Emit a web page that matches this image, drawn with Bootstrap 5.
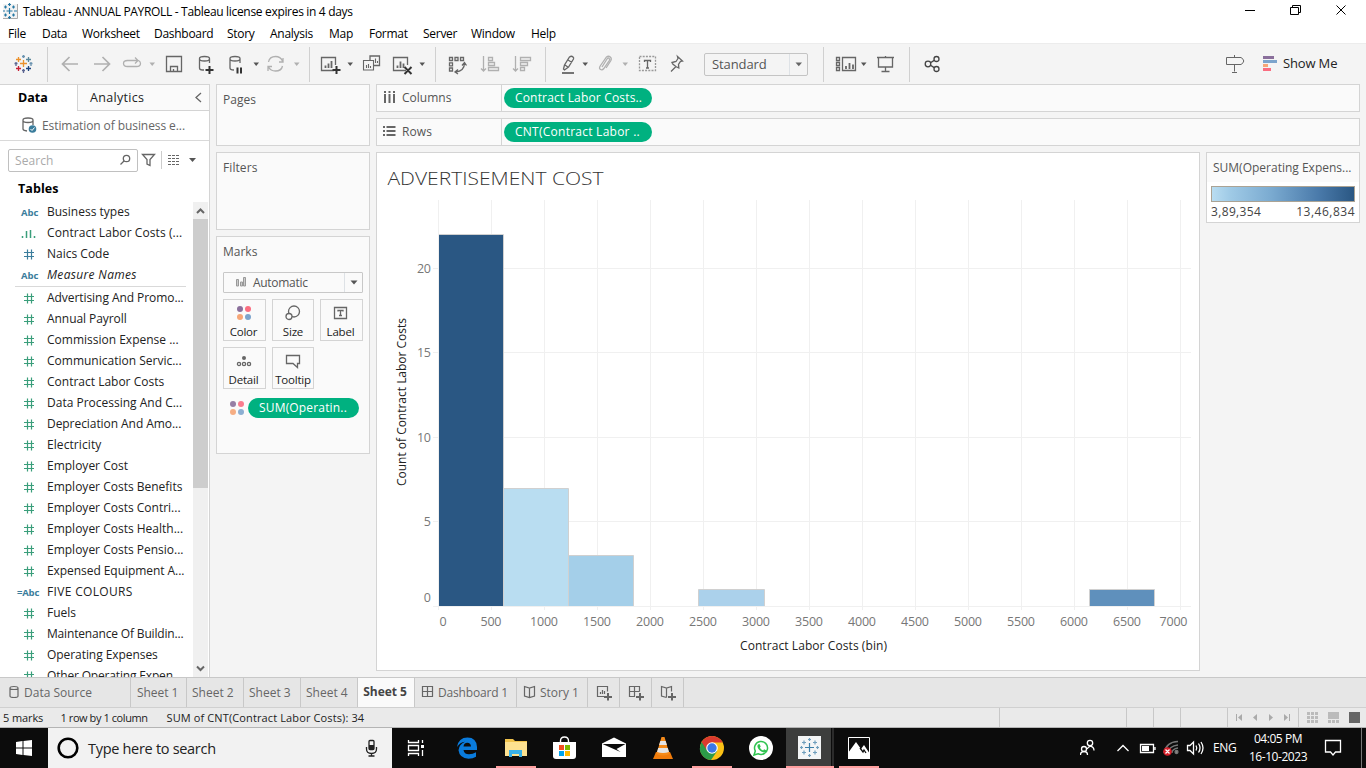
<!DOCTYPE html>
<html lang="en">
<head>
<meta charset="utf-8">
<meta name="viewport" content="width=device-width, initial-scale=1">
<title>Tableau - ANNUAL PAYROLL</title>
<link href="https://cdn.jsdelivr.net/npm/bootstrap@5.3.0/dist/css/bootstrap.min.css" rel="stylesheet">
<style>
body{width:1366px;height:768px;overflow:hidden;background:#f4f4f4;font:12px/16px "Open Sans","Noto Sans",sans-serif;color:#333}
svg{display:block;flex:none;fill:none;stroke:#666;stroke-width:1.3}
svg text{stroke:none}
.titlebar{height:23px;color:#000;font-size:12px;letter-spacing:-.32px}
.menubar{height:20px;color:#000;font-size:12px;letter-spacing:-.28px;padding-top:1px}
.menubar span{flex:none;white-space:nowrap;padding-left:8px}
.toolbar{height:41px;border-top:1px solid #ececec}
.toolbar .sep{width:1px;height:35px;background:#d0d0d0;flex:none}
.stdbox{width:104px;height:23px;border:1px solid #c4c4c4;border-radius:2px;font-size:13px;color:#555;letter-spacing:-.1px}
.work{height:593px}
.side{width:210px;border-top:1px solid #d4d4d4;border-right:1px solid #d4d4d4;background:#fff;flex:none}
.tab-on{width:77px;color:#000;font-weight:700;font-size:12.5px}
.tab-off{background:#fafafa;border-left:1px solid #d4d4d4;border-bottom:1px solid #d4d4d4;color:#222;font-size:12.5px;letter-spacing:.32px}
.source{height:30px;border-bottom:1px solid #d9d9d9;color:#666;letter-spacing:-.08px}
.searchbox{width:130px;height:23px;border:1px solid #c0c0c0;border-radius:2px;color:#aaa;margin-left:8px}
.fields{height:475px}
.fld{height:21px;color:#222;white-space:nowrap}
.fld svg{width:47px;height:21px}
.fld span:last-child{padding-bottom:1px}
.ftype{width:47px;padding-left:21px;font-size:9.5px;font-weight:700;color:#3b7d9c;padding-top:1px}
.calc{padding-left:17px;letter-spacing:-.2px}
.sp-a{letter-spacing:-.06px}
.sp-b{letter-spacing:-.17px}
.sp-c{letter-spacing:.08px}
.sp-d{letter-spacing:.33px}
.fldrule{height:1px;margin:0 0 1px 15px;width:171px;background:#d9d9d9}
.hash-dim{color:#3b7d9c}
.hash-mea{color:#3a9e7b}
.sbar{width:15px;background:#f0f0f0;margin-right:1px}
.sthumb{height:269px;background:#cdcdcd}
.shelfcard{border:1px solid #d4d4d4;background:#fafafa;color:#555}
.midcol{width:154px;margin-left:6px;gap:6px}
.midcol .shelfcard{padding:7px 6px}
.shelf{height:28px}
.shelfname{width:125px;border-right:1px solid #d4d4d4}
.pill{background:#00b180;color:#fff;border-radius:10px;height:20px;font-weight:500;white-space:nowrap;letter-spacing:.17px}
.markgrid{display:grid;grid-template-columns:43px 42px 43px;gap:6px;margin-top:6px}
.markbtn{height:42px;border:1px solid #d4d4d4;background:#fafafa;color:#222;font-size:11.5px;letter-spacing:-.2px}
.markbtn svg{margin:5px 0 3px}
.nudge{padding-right:2px}
.marktype{height:21px;border:1px solid #c8c8c8;border-radius:1px}
.ramp{height:16px;width:144px;border:1px solid #aba394;background:linear-gradient(90deg,#b9ddf1,#9fcae6 13%,#7aaad0 42%,#4a7aaa 75%,#2a5783)}
.legnum{letter-spacing:.35px;color:#444}
.sheettabs{height:31px;background:#e6e6e6;border-top:1px solid #c8c8c8;border-bottom:1px solid #d0d0d0;color:#666}
.sheettabs>div{border-right:1px solid #c8c8c8;white-space:nowrap;flex:none}
.sheettabs .sht{padding-left:5px}
.sheettabs .cur{background:#fafafa;color:#444;font-weight:700;letter-spacing:-.05px}
.status{height:20px;background:#eaeaea;border-bottom:1px solid #b4b4b4;color:#222;font-size:11px;white-space:nowrap}
.st-a{letter-spacing:-.1px}
.st-b{letter-spacing:-.42px}
.st-c{letter-spacing:.12px}
.cell{border-left:1px solid #c8c8c8;flex:none}
.taskbar{height:40px;background:#0c0c0c;color:#fff}
.tsearch{width:344px;background:#f2f2f2;color:#222;font-size:14.5px;letter-spacing:-.3px}
.clock{width:76px;letter-spacing:-.45px;line-height:18px}
</style>
</head>
<body>
<svg width="0" height="0" class="position-absolute"><symbol id="hash" viewBox="0 0 47 21"><path d="M27.500 5.500v10M31.500 5.500v10M24 8.500h10M24 12.500h10" stroke="currentColor" stroke-width="1.200"/></symbol></svg>
<header class="bg-white">
<div class="titlebar d-flex align-items-center">
<svg width="23" height="23" viewBox="0 0 23 23"><path d="M3 4h14v14H3z" stroke="none" fill="#f3f3f3"/><path d="M17.500 4v14.500H3" stroke="#aaa" stroke-width="1"/><path d="M9.500 8v6M6.500 11h6M9.500 3v3M8 4.500h3M9.500 16v3M8 17.500h3M3 11h2M14 11h3M5.500 5.500v3M4 7h3M13.500 5.500v3M12 7h3M5.500 13.500v3M4 15h3M13.500 13.500v3M12 15h3" stroke="#2678a4" stroke-width="1.200"/></svg>
<span style="padding-top:1px">Tableau - ANNUAL PAYROLL - Tableau license expires in 4 days</span>
<svg class="ms-auto" width="146" height="23" viewBox="1220 0 146 23" style="stroke:#000;stroke-width:1"><path d="M1245 10.500h10M1290.500 7.500h8v7h-8zM1292.500 7.500v-2h8v7h-2M1336.500 5.500l9 9M1345.500 5.500l-9 9"/></svg>
</div>
<div class="menubar d-flex align-items-center"><span style="width:34px">File</span><span style="width:40px">Data</span><span style="width:72px">Worksheet</span><span style="width:73px">Dashboard</span><span style="width:43px">Story</span><span style="width:59px">Analysis</span><span style="width:40px">Map</span><span style="width:54px">Format</span><span style="width:48px">Server</span><span style="width:60px">Window</span><span>Help</span></div>
</header>

<div class="toolbar d-flex align-items-center">
<svg width="47" height="40" viewBox="0 44 47 40"><g stroke-width="1.300"><path d="M23.500 60v7M20 63.500h7" stroke="#eb912c"/><path d="M23.500 55v3M22 56.500h3M31 62v4M29.500 63.500h3" stroke="#6b93b0"/><path d="M23.500 69v4M22 70.500h3M16 62v4M14.500 63.500h3" stroke="#5c6692"/><path d="M18.500 57v5M16 59.500h5" stroke="#eb912c"/><path d="M28.500 57v5M26 59.500h5" stroke="#59879b"/><path d="M18.500 66v5M16 68.500h5" stroke="#c72037"/><path d="M28.500 66v5M26 68.500h5" stroke="#1f447e"/></g></svg>
<div class="sep"></div>
<svg width="109" height="40" viewBox="48 44 109 40" style="stroke:#b0b0b0"><path d="M62.500 64H78M69.500 57l-7 7 7 7M94 64h15.500M102.500 57l7 7-7 7" stroke-width="1.700"/><path d="M133 60.500h-5.500q-4 0-4 3t4 3h9q4 0 4-3 0-2-2-3M131 60.500h7M135 57.500l3 3-3 3"/><path d="M149.500 62.500h5.500l-2.800 3.500z" fill="#b0b0b0" stroke="none"/></svg>
<svg width="34" height="40" viewBox="157 44 34 40"><path d="M166.500 56.500h15v15h-15zM170.500 71v-4.500h7V71M173.500 71v-2"/></svg>
<svg width="70" height="40" viewBox="191 44 70 40"><path d="M204 70h-1.500q-3 0-3-2V58.500q0-2 5-2t5 2V63M199.500 59q0 2 5 2t5-2M234 70q-4 0-4-2V58.500q0-2 5-2t5 2V63M230 59q0 2 5 2t5-2"/><path d="M209.500 66v8M205.500 70h8M237.500 67.500v6M241 67.500v6" stroke="#333" stroke-width="2"/><path d="M253.500 62.500h5.500l-2.800 3.500z" fill="#555" stroke="none"/></svg>
<svg width="48" height="40" viewBox="261 44 48 40" style="stroke:#b0b0b0"><path d="M268.500 62q1-5.500 7-5.500 5 0 7 4.500M283 58v4h-4M282.500 66q-1 5-7 5-5 0-7-4M268 71v-4.500h4"/><path d="M294 62.500h5.500l-2.800 3.500z" fill="#b0b0b0" stroke="none"/></svg>
<div class="sep"></div>
<svg width="125" height="40" viewBox="310 44 125 40"><path d="M334 70.500h-12.500v-13h14V65M406 70.500h-12.500v-13h14V65M370 60.500v-4.500h9.500v9.500H374"/><path d="M363.500 60.500h10v9.500h-10zM366.500 68v-3M368.500 68v-4M370.500 68v-2M373.500 63v-2.500M375.500 63v-4.500M377.500 63v-2" stroke-width="1.100"/><path d="M325.500 68v-2.500M328.500 68v-4.500M331.500 68v-7M397.500 68v-2.500M400.500 68v-6.500M403.500 68v-4.500" stroke-width="1.800"/><path d="M336.500 66v8M332.500 70h8M404.500 67l7 7M411.500 67l-7 7" stroke="#333" stroke-width="2"/><path d="M347.500 62.500h5.500l-2.800 3.500zM419.500 62.500h5.500l-2.800 3.500z" fill="#555" stroke="none"/></svg>
<div class="sep"></div>
<svg width="109" height="40" viewBox="436 44 109 40"><path d="M449.500 57.500h3v3h-3zM455 57.500h3v3h-3zM460.500 57.500h3v3h-3zM449.500 62.800h3v3h-3zM449.500 68h3v3h-3zM464.500 63q0 8-9 9M462 65.500l2.500-3 2 3M458 69.500l-3 2.500 3 2"/><path stroke="#b0b0b0" d="M483.500 56v15M481 68.500l2.500 2.500 2.500-2.500M488.500 57.500h4v3h-4zM488.500 62.500h6v3h-6zM488.500 67.500h10v3h-10zM515.500 56v15M513 68.500l2.500 2.500 2.500-2.500M520.500 57.500h10v3h-10zM520.500 62.500h7v3h-7zM520.500 67.500h4v3h-4z"/></svg>
<div class="sep"></div>
<svg width="84" height="40" viewBox="546 44 84 40"><path d="M563.500 69l1-4 5-8q2-1.500 3.500 0 1 1 .5 2l-5 8-4 3zM565 65l3.500 2.500M568 60l4 2.500"/><path d="M562 73h12" stroke-width="1.800"/><path stroke="#b0b0b0" d="M602 67l5-8q1-1.500 2-.8t.3 2.300l-5.500 8q-1.500 2-3.300 1t-.3-3.500l6.300-9q2-1.500 3.800 0t.3 4l-4.500 7"/><path d="M582.500 62.500h5.500l-2.800 3.500z" fill="#555" stroke="none"/><path d="M622.500 62.500h5.500l-2.800 3.500z" fill="#b0b0b0" stroke="none"/></svg>
<svg width="74" height="40" viewBox="630 44 74 40"><path d="M639.500 56.500h16v14h-16z" stroke-dasharray="2 1.200" stroke="#999"/><path d="M644.500 62v-1.500h6V62M647.500 60.500V68M646 68h3"/><path d="M677.500 56.500l5 4.500-2 .3-2 3 .3 3.700-3-1.500-3-2.500-.8-1.500 4-1 2-3zM676 66.500l-5 5"/></svg>
<div class="stdbox d-flex align-items-center"><span style="padding-left:7px;margin-top:-1px">Standard</span><span class="ms-auto border-start h-100 d-flex align-items-center justify-content-center" style="width:18px"><svg width="8" height="5" viewBox="0 0 8 5"><path d="M.5 .5h6.500l-3.200 3.800z" fill="#666" stroke="none"/></svg></span></div>
<svg width="15" height="40"></svg>
<div class="sep"></div>
<svg width="85" height="40" viewBox="824 44 85 40"><path d="M836.500 57.500h3v3h-3zM836.500 62.500h3v3h-3zM836.500 67.500h3v3h-3zM842.500 57.500h13v13h-13z"/><path d="M846 69v-3M849.500 69v-6M853 69v-4.500" stroke-width="1.800"/><path d="M861 62.500h5.500l-2.800 3.500z" fill="#555" stroke="none"/><path d="M877 57.500h17M878.500 57.500v9.500h14v-9.500M885.500 56v2M885.500 67v4M881.500 71.500h8"/></svg>
<div class="sep"></div>
<svg width="40" height="40" viewBox="910 44 40 40" style="stroke:#444"><circle cx="928" cy="64" r="2.800"/><circle cx="936.500" cy="59" r="2.500"/><circle cx="936.500" cy="69" r="2.500"/><path d="M930.500 62.800l3.700-2.400M930.500 65.200l3.700 2.400"/></svg>
<svg class="ms-auto" width="63" height="40" viewBox="1220 44 63 40"><path d="M1226.500 57.500h14.500q5.500 3.500 0 7h-14.500zM1234.500 55v2.500M1234.500 64.500v7M1232 72.500h5" stroke-width="1"/><g stroke="none"><path fill="#8a6f9b" d="M1263 56h11v3h-11z"/><path fill="#7ca4cc" d="M1263 60h14v3h-14z"/><path fill="#f6a677" d="M1263 64h5v3h-5z"/><path fill="#fa6d80" d="M1263 68h8v3h-8z"/></g></svg>
<span style="width:83px;font-size:13px;color:#222;letter-spacing:-.15px;margin-top:-2px">Show Me</span>
</div>

<main class="work d-flex">
<aside class="side d-flex flex-column">
<div class="d-flex" style="height:26px"><div class="tab-on d-flex align-items-center ps-3"><span style="margin-left:2px">Data</span></div><div class="tab-off flex-grow-1 d-flex align-items-center ps-2"><span style="margin-left:4px">Analytics</span><svg class="ms-auto" width="20" height="20" viewBox="0 0 20 20"><path d="M12 5l-5 4.500 5 4.500"/></svg></div></div>
<div class="source d-flex align-items-center"><svg width="42" height="28" viewBox="0 112 42 28"><path d="M27 131q-4-.5-4-2v-9q0-2 5-2t5 2v5M23 120.500q0 2 5 2t5-2"/><circle cx="32.500" cy="129" r="3.800" fill="#3b7d9c" stroke="none"/><path d="M30.500 129l1.500 1.500 2.500-3" stroke="#fff" stroke-width="1"/></svg><span>Estimation of business e...</span></div>
<div class="d-flex align-items-center" style="height:39px"><div class="searchbox d-flex align-items-center"><span class="sp-c" style="padding-left:6px">Search</span><svg class="ms-auto" width="21" height="21" viewBox="117 150 21 21"><circle cx="127.500" cy="158.500" r="3.200"/><path d="M125 161l-3.500 3.500"/></svg></div><svg width="71" height="39" viewBox="138 141 71 39"><path d="M142.500 154.500h12l-4.500 5v6l-3-1.500V159.500z"/><path d="M161.500 151v18" stroke="#ccc" stroke-width="1"/><path d="M168 155.500h12M168 158.500h12M168 161.500h12M168 164.500h12" stroke-dasharray="3 1" stroke-width="1"/><path d="M189 158h7l-3.500 4z" fill="#555" stroke="none"/></svg></div>
<div class="fw-bold ps-3" style="height:22px;color:#000;font-size:12.500px;padding-top:1px"><span class="sp-c" style="margin-left:2px">Tables</span></div>
<div class="fields d-flex overflow-hidden">
<div class="flex-grow-1">
<div class="fld d-flex align-items-center"><span class="ftype">Abc</span><span>Business types</span></div>
<div class="fld d-flex align-items-center"><svg viewBox="0 0 47 21"><path d="M22.500 13v2M26.500 8v7M30.500 7v8M34.500 13v2" stroke="#3a9e7b" stroke-width="1.500"/></svg><span class="sp-c">Contract Labor Costs (...</span></div>
<div class="fld d-flex align-items-center"><svg class="hash-dim"><use href="#hash"/></svg><span>Naics Code</span></div>
<div class="fld d-flex align-items-center"><span class="ftype">Abc</span><span class="fst-italic sp-d">Measure Names</span></div>
<div class="fldrule"></div>
<div class="fld d-flex align-items-center"><svg class="hash-mea"><use href="#hash"/></svg><span class="sp-a">Advertising And Promo...</span></div>
<div class="fld d-flex align-items-center"><svg class="hash-mea"><use href="#hash"/></svg><span class="sp-a">Annual Payroll</span></div>
<div class="fld d-flex align-items-center"><svg class="hash-mea"><use href="#hash"/></svg><span>Commission Expense ...</span></div>
<div class="fld d-flex align-items-center"><svg class="hash-mea"><use href="#hash"/></svg><span>Communication Servic...</span></div>
<div class="fld d-flex align-items-center"><svg class="hash-mea"><use href="#hash"/></svg><span>Contract Labor Costs</span></div>
<div class="fld d-flex align-items-center"><svg class="hash-mea"><use href="#hash"/></svg><span>Data Processing And C...</span></div>
<div class="fld d-flex align-items-center"><svg class="hash-mea"><use href="#hash"/></svg><span class="sp-a">Depreciation And Amo...</span></div>
<div class="fld d-flex align-items-center"><svg class="hash-mea"><use href="#hash"/></svg><span class="sp-c">Electricity</span></div>
<div class="fld d-flex align-items-center"><svg class="hash-mea"><use href="#hash"/></svg><span>Employer Cost</span></div>
<div class="fld d-flex align-items-center"><svg class="hash-mea"><use href="#hash"/></svg><span>Employer Costs Benefits</span></div>
<div class="fld d-flex align-items-center"><svg class="hash-mea"><use href="#hash"/></svg><span>Employer Costs Contri...</span></div>
<div class="fld d-flex align-items-center"><svg class="hash-mea"><use href="#hash"/></svg><span>Employer Costs Health...</span></div>
<div class="fld d-flex align-items-center"><svg class="hash-mea"><use href="#hash"/></svg><span>Employer Costs Pensio...</span></div>
<div class="fld d-flex align-items-center"><svg class="hash-mea"><use href="#hash"/></svg><span class="sp-a">Expensed Equipment A...</span></div>
<div class="fld d-flex align-items-center"><span class="ftype calc">=Abc</span><span class="sp-d">FIVE COLOURS</span></div>
<div class="fld d-flex align-items-center"><svg class="hash-mea"><use href="#hash"/></svg><span>Fuels</span></div>
<div class="fld d-flex align-items-center"><svg class="hash-mea"><use href="#hash"/></svg><span class="sp-b">Maintenance Of Buildin...</span></div>
<div class="fld d-flex align-items-center"><svg class="hash-mea"><use href="#hash"/></svg><span class="sp-a">Operating Expenses</span></div>
<div class="fld d-flex align-items-center"><svg class="hash-mea"><use href="#hash"/></svg><span class="sp-b">Other Operating Expen</span></div>
</div>
<div class="sbar d-flex flex-column justify-content-between"><div><svg width="15" height="17" viewBox="0 0 15 17"><path d="M4 11l3.500-3.500L11 11" stroke-width="2"/></svg><div class="sthumb"></div></div><svg width="15" height="17" viewBox="0 0 15 17"><path d="M4 6.500l3.500 3.500L11 6.500" stroke-width="2"/></svg></div>
</div>
</aside>

<section class="midcol d-flex flex-column">
<div class="shelfcard" style="height:62px"><span>Pages</span></div>
<div class="shelfcard" style="height:78px"><span class="sp-c">Filters</span></div>
<div class="shelfcard" style="height:218px"><span>Marks</span>
<div class="marktype d-flex align-items-center" style="margin-top:12px;width:140px"><svg width="29" height="19" viewBox="224 273 29 19"><path d="M236.500 279.500h2v6.500h-2zM240.500 282h2v4h-2zM243.500 277.500h2v8.500h-2z" stroke="#999" stroke-width="1" fill="#ccc"/></svg><span class="sp-b" style="letter-spacing:-.3px">Automatic</span><span class="ms-auto h-100 border-start d-flex align-items-center justify-content-center" style="width:18px"><svg width="8" height="5" viewBox="0 0 8 5"><path d="M.5 .5h7l-3.500 4z" fill="#555" stroke="none"/></svg></span></div>
<div class="markgrid">
<div class="markbtn nudge d-flex flex-column align-items-center"><svg width="16" height="16" viewBox="0 0 16 16"><g stroke="none"><circle cx="4" cy="4" r="3" fill="#8a6f9b"/><circle cx="12" cy="4" r="3" fill="#fa6d80"/><circle cx="4" cy="12" r="3" fill="#f6a677"/><circle cx="12" cy="12" r="3" fill="#7ca4cc"/></g></svg>Color</div>
<div class="markbtn d-flex flex-column align-items-center"><svg width="16" height="16" viewBox="0 0 16 16"><circle cx="9" cy="6.500" r="5.500"/><circle cx="4" cy="11.500" r="3" fill="#fafafa"/></svg>Size</div>
<div class="markbtn nudge d-flex flex-column align-items-center"><svg width="16" height="16" viewBox="0 0 16 16"><path d="M1.500 2.500h12v11h-12zM5 6.500V5.500h5v1M7.500 5.500v5M6 10.500h3"/></svg>Label</div>
<div class="markbtn nudge d-flex flex-column align-items-center"><svg width="16" height="16" viewBox="0 0 16 16"><circle cx="8" cy="5" r="2" fill="#666" stroke="none"/><circle cx="3" cy="11" r="1.600"/><circle cx="8" cy="11" r="1.600"/><circle cx="13" cy="11" r="1.600"/></svg>Detail</div>
<div class="markbtn d-flex flex-column align-items-center"><svg width="16" height="16" viewBox="0 0 16 16"><path d="M1.500 2.500h13v8h-2v4l-4.500-4H1.500z"/></svg>Tooltip</div>
</div>
<div class="d-flex align-items-center" style="margin:9px 0 0 6px"><svg width="16" height="16" viewBox="0 0 16 16"><g stroke="none"><circle cx="4" cy="4" r="3" fill="#967fa5"/><circle cx="12" cy="4" r="3" fill="#fa7d8e"/><circle cx="4" cy="12" r="3" fill="#f6ae84"/><circle cx="12" cy="12" r="3" fill="#8cafd2"/></g></svg><div class="pill d-flex align-items-center" style="width:111px;margin-left:3px;padding-left:11px"><span>SUM(Operatin..</span></div></div>
</div>
</section>

<section class="d-flex flex-column" style="width:984px;margin-left:6px;gap:6px">
<div class="shelf shelfcard d-flex align-items-center"><div class="shelfname h-100 d-flex align-items-center"><svg width="25" height="26" viewBox="377 85 25 26"><path d="M385 91v2M389.500 91v2M394 91v2M385 94v9M389.500 94v9M394 94v9" stroke-width="2"/></svg><span>Columns</span></div><div class="pill d-flex align-items-center" style="width:148px;margin-left:2px;padding-left:11px"><span>Contract Labor Costs..</span></div></div>
<div class="shelf shelfcard d-flex align-items-center"><div class="shelfname h-100 d-flex align-items-center"><svg width="25" height="26" viewBox="377 119 25 26"><path d="M383 127h2M383 131h2M383 135h2M386.500 127h9M386.500 131h9M386.500 135h9" stroke-width="2"/></svg><span class="sp-c">Rows</span></div><div class="pill d-flex align-items-center" style="width:148px;margin-left:2px;padding-left:11px"><span style="letter-spacing:.25px">CNT(Contract Labor ..</span></div></div>
<div class="d-flex align-items-start" style="gap:6px">
<div class="bg-white" style="border:1px solid #d4d4d4">
<svg width="822" height="517" viewBox="377 153 822 517" style="stroke-width:1" font-size="12.500">
<text x="387.500" y="185" font-size="19" font-weight="300" fill="#333" textLength="216" lengthAdjust="spacingAndGlyphs">ADVERTISEMENT COST</text>
<path stroke="#f0f0f0" d="M438.500 200v410M491.500 200v410M544.500 200v410M597.500 200v410M650.500 200v410M703.500 200v410M756.500 200v410M809.500 200v410M862.500 200v410M915.500 200v410M968.500 200v410M1021.500 200v410M1074.500 200v410M1127.500 200v410M1180.500 200v410M433 268.500h758M433 352.500h758M433 437.500h758M433 521.500h758M433 606.500h758"/>
<g stroke="#d0d0d0"><path fill="#b9ddf1" d="M503.500 606V488.500h65V606"/><path fill="#a4cfe9" d="M568.500 606V555.500h65V606"/><path fill="#abd1eb" d="M698.500 606V589.500h66V606"/><path fill="#5f90bc" d="M1089.500 606V589.500h65V606"/><path fill="#2a5783" stroke="none" d="M439 606V235h64.500V606z"/><path d="M439 234.500h64.500V606"/></g>
<g fill="#777" text-anchor="end"><text x="431" y="273" textLength="14">20</text><text x="431" y="357" textLength="14">15</text><text x="431" y="441.500" textLength="14">10</text><text x="431" y="526">5</text><text x="431" y="602">0</text></g>
<g fill="#777" text-anchor="middle"><text x="443" y="626">0</text><text x="491" y="626" textLength="21">500</text><text x="544" y="626" textLength="28">1000</text><text x="597" y="626" textLength="28">1500</text><text x="650" y="626" textLength="28">2000</text><text x="703" y="626" textLength="28">2500</text><text x="756" y="626" textLength="28">3000</text><text x="809" y="626" textLength="28">3500</text><text x="862" y="626" textLength="28">4000</text><text x="915" y="626" textLength="28">4500</text><text x="968" y="626" textLength="28">5000</text><text x="1021" y="626" textLength="28">5500</text><text x="1074" y="626" textLength="28">6000</text><text x="1127" y="626" textLength="28">6500</text><text x="1173.500" y="626" textLength="28">7000</text></g>
<g fill="#222" font-size="12" font-weight="500"><text x="740" y="650" textLength="147">Contract Labor Costs (bin)</text><text transform="translate(406 486) rotate(-90)" textLength="168">Count of Contract Labor Costs</text></g>
</svg>
</div>
<div class="shelfcard bg-white" style="width:154px;height:71px"><div style="background:#fafafa;height:29px;padding:7px 0 0 6px"><span>SUM(Operating Expens...</span></div><div class="ramp" style="margin:4px 0 2px 4px"></div><div class="legnum d-flex justify-content-between" style="padding:0 4px 0 4px"><span>3,89,354</span><span style="letter-spacing:.5px">13,46,834</span></div></div>
</div>
</section>
</main>

<div class="sheettabs d-flex lh-1">
<div class="d-flex align-items-center" style="width:131px"><svg width="24" height="29" viewBox="0 678 24 29"><path d="M10 688q0-1.500 4-1.500t4 1.500v8q0 1.500-4 1.500t-4-1.500zM10 688q0 1.500 4 1.500t4-1.500" stroke-width="1.200"/></svg><span>Data Source</span></div>
<div class="sht sp-a d-flex align-items-center" style="width:56px;padding-left:6px">Sheet 1</div>
<div class="sht d-flex align-items-center" style="width:57px">Sheet 2</div>
<div class="sht d-flex align-items-center" style="width:57px">Sheet 3</div>
<div class="sht d-flex align-items-center" style="width:57px">Sheet 4</div>
<div class="cur d-flex align-items-center justify-content-center" style="width:57px;padding:0 2px 2px 0">Sheet 5</div>
<div class="sp-b d-flex align-items-center" style="width:102px"><svg width="23" height="29" viewBox="415 678 23 29"><path d="M422.500 686.500h10v10h-10zM427.500 686.500v10M422.500 691.500h10" stroke-width="1.200"/></svg><span>Dashboard 1</span></div>
<div class="d-flex align-items-center" style="width:71px"><svg width="23" height="29" viewBox="517 678 23 29"><path d="M524.500 686.500l5 1.500 5-1.500v9.500l-5 1.500-5-1.500zM529.500 688v9.500" stroke-width="1.200"/></svg><span>Story 1</span></div>
<div><svg width="31" height="29" viewBox="588 678 31 29"><path d="M604 696.500h-6.500v-10h10v5M600.500 694v-2M602.500 694v-4M604.500 694v-3" stroke-width="1.200"/><path d="M608 693v7.500M604 697h8" stroke-width="2"/></svg></div>
<div><svg width="31" height="29" viewBox="620 678 31 29"><path d="M635 696.500h-5.500v-10h10v5M634.500 686.500v10M629.500 691.500h10" stroke-width="1.200"/><path d="M640 693v7.500M636 697h8" stroke-width="2"/></svg></div>
<div><svg width="31" height="29" viewBox="652 678 31 29"><path d="M666.500 697.500l-5-1.500v-9.500l5 1.500 5-1.500v5M666.500 688v9.500" stroke-width="1.200"/><path d="M672 693v7.500M668 697h8" stroke-width="2"/></svg></div>
</div>
<div class="status d-flex align-items-center"><span class="st-a" style="width:58px;padding-left:3px">5 marks</span><span class="st-b" style="width:108.500px;padding-left:2.500px">1 row by 1 column</span><span class="st-c">SUM of CNT(Contract Labor Costs): 34</span>
<div class="ms-auto cell h-100" style="width:127px"></div><div class="cell h-100" style="width:27px"></div><div class="cell h-100" style="width:27px"></div><div class="cell h-100" style="width:47px"></div>
<div class="cell h-100" style="width:71px"><svg width="70" height="19" viewBox="1228 708 70 19"><path fill="#aaa" stroke="none" d="M1236 714h1v7h-1zM1242 714v7l-4-3.500zM1257 714v7l-4-3.500zM1269 714v7l4-3.500zM1284 714v7l4-3.500zM1289 714h1v7h-1z"/></svg></div>
<div class="cell h-100" style="width:68px"><svg width="67" height="19" viewBox="1299 708 67 19"><path fill="#bbb" stroke="none" d="M1307 712h3v3h-3zM1311 712h3v3h-3zM1315 712h3v3h-3zM1307 716h3v3h-3zM1311 716h3v3h-3zM1315 716h3v3h-3zM1307 720h3v3h-3zM1311 720h3v3h-3zM1315 720h3v3h-3zM1328 712h11v7h-11zM1328 720h3v3h-3zM1332 720h3v3h-3zM1336 720h3v3h-3z"/><path fill="#666" stroke="none" d="M1349 712h11v11h-11z"/></svg></div>
</div>

<footer class="taskbar d-flex">
<svg width="48" height="40" viewBox="0 728 48 40"><path fill="#fff" stroke="none" d="M16 742l6.500-1v6.500H16zM23.500 741l8.500-1v7.500h-8.500zM16 748.500h6.500v6.500l-6.500-1zM23.500 748.500H32v7.500l-8.500-1z"/></svg>
<div class="tsearch d-flex align-items-center"><svg width="40" height="40" viewBox="48 728 40 40"><circle cx="68" cy="748" r="9.300" stroke="#000" stroke-width="2.600"/></svg><span style="padding-top:1px">Type here to search</span><svg class="ms-auto" width="42" height="40" viewBox="350 728 42 40"><rect x="369" y="740.500" width="5" height="9" rx="1" stroke="#222"/><path d="M369 745h5v5h-5z" fill="#222" stroke="none"/><path d="M366.500 747v2q0 4.500 5 4.500t5-4.500v-2M371.500 753v3M368.500 756h6" stroke="#222"/></svg></div>
<svg width="48" height="40" viewBox="392 728 48 40" style="stroke:#fff"><path d="M408.500 740v2.500h10V740M408.500 745.500h10v5h-10zM408.500 756v-2.500h10v2.500M422.500 740v3M422.500 750v6"/><path d="M421 745h3v3h-3z" fill="#fff" stroke="none"/></svg>
<svg width="56" height="40" viewBox="440 728 56 40"><path fill="#0a7bdc" stroke="none" d="M457 747q1.500-9.500 10.500-9.500 9 0 9.500 9.500v3h-13.500q.5 4.200 5.500 4.200 4 0 7-2v4.500q-3 2-7.500 2-9-.5-10-8.500.5-6 6.500-8.500-5 .5-8 5.300zM463.500 746.500h7.500q-.3-3.700-3.700-3.700-3.300 0-3.800 3.700z"/></svg>
<svg width="40" height="40" viewBox="496 728 40 40"><path fill="#f1c34c" stroke="none" d="M505 739h8l2 2h12v3h-22z"/><path fill="#fde190" stroke="none" d="M505 742h22v14h-22z"/><path fill="#39b1e8" stroke="none" d="M509 757v-7h13v7h-3v-3h-7v3z"/><path fill="#ff9f9f" stroke="none" d="M496 766h40v2h-40z"/></svg>
<svg width="56" height="40" viewBox="536 728 56 40"><path stroke="#fff" stroke-width="1.400" d="M560.500 743v-2q0-4 4-4t4 4v2"/><path fill="#fff" stroke="none" d="M553 742h23v14q0 3-3 3h-17q-3 0-3-3z"/><g stroke="none"><path fill="#f25022" d="M559 745h5v5h-5z"/><path fill="#7fba00" d="M565 745h5v5h-5z"/><path fill="#00a4ef" d="M559 751h5v5h-5z"/><path fill="#ffb900" d="M565 751h5v5h-5z"/></g></svg>
<svg width="48" height="40" viewBox="592 728 48 40"><path fill="#fff" stroke="none" d="M602 743.500l12-6 12 6v13.500h-24z"/><path fill="#0c0c0c" stroke="none" d="M602.500 744h23l-9 5 4 3z"/></svg>
<svg width="52" height="40" viewBox="640 728 52 40"><path fill="#f07c0c" stroke="none" d="M656 752h14l3 7h-20z"/><path fill="#f58b1b" stroke="none" d="M661.500 737h3l5 17q-6.500 3-13 0z"/><path fill="#e5e5e5" stroke="none" d="M660.300 741h5.400l1.200 4h-7.800zM658.200 748h9.600l1.200 4q-6 2-12 0z"/></svg>
<svg width="40" height="40" viewBox="692 728 40 40"><g stroke="none"><circle cx="712" cy="748" r="12" fill="#fbc116"/><path fill="#2c9b48" d="M712 748l-10.400-6q-3.600 7 .1 12.500 3.300 5 9.300 5.500l6.200-9z"/><path fill="#db3a2f" d="M712 748v-5.500h10.700q-3.700-6.500-10.700-6.500-6.500 0-10.400 6l5.400 8.500z"/><circle cx="712" cy="748" r="5.800" fill="#fff"/><circle cx="712" cy="748" r="4.700" fill="#3b78e7"/><path fill="#ff9f9f" d="M692 766h40v2h-40z"/></g></svg>
<svg width="54" height="40" viewBox="732 728 54 40"><circle cx="761" cy="748" r="12" fill="#fff" stroke="none"/><path d="M754 755l1.300-4a6.500 6.500 0 1 1 2.700 2.700z" stroke="#2fc350" stroke-width="1.500"/><path fill="#2fc350" stroke="none" d="M758 744.500l1.500-.5 1.200 2.500-.8 1.200q1.200 2 3.200 2.800l1-1.200 2.400 1.200q0 2-2.500 2-5-1-6.500-5.500-.2-1.500.5-2.500z"/></svg>
<svg width="49" height="40" viewBox="786 728 49 40"><g stroke="none"><path fill="#3d3e3d" d="M786 728h45v38h-45z"/><path fill="#2b2b2b" d="M832 728h2v38h-2z"/><path fill="#ff9f9f" d="M786 766h48v2h-48z"/><path fill="#f3f5f6" d="M798 736h23v23h-23z"/></g><path stroke="#3b7fa8" stroke-width="1.200" d="M809.500 743v9M805 747.500h9"/><path stroke="#6f9fbd" stroke-width="1.200" d="M809.500 738v3M808 739.500h3M809.500 754v3M808 755.500h3M801.500 746v3M800 747.500h3M817.500 746v3M816 747.500h3M804 740.500v4M802 742.500h4M815 740.500v4M813 742.500h4M804 750.500v4M802 752.500h4M815 750.500v4M813 752.500h4"/></svg>
<svg width="48" height="40" viewBox="835 728 48 40"><path stroke="#fff" stroke-width="1" d="M848.500 737.500h21v21h-21z"/><path fill="#fff" stroke="none" d="M848 753l8-11 5 7 3-4 6 9v5h-22z"/><path stroke="#0c0c0c" d="M860 748l3 4 1-2 2 3"/><path fill="#ff9f9f" stroke="none" d="M839 766h40v2h-40z"/></svg>
<svg class="ms-auto" width="133" height="40" viewBox="1080 728 133 40" style="stroke:#fff"><circle cx="1090" cy="743" r="2.700"/><circle cx="1084" cy="749" r="2.500"/><path d="M1087 749q3-4.500 6-1.500 1 1 1 3M1080.500 755q0-3.500 3.500-3.500t3.500 3.500M1117.500 751l5.500-5.500 5.500 5.500"/><path d="M1140.500 744.500h13v8h-13zM1155 747v3"/><path fill="#fff" stroke="none" d="M1142 746h7v5h-7z"/><g stroke="#777"><path d="M1164 753q2-11 14-11.500M1168 753q1-7 10-8M1172 753q0-4 6-5"/><circle cx="1176.500" cy="752" r="1.500" fill="#888"/></g><circle cx="1167.500" cy="751.500" r="4.300" fill="#d81f2a" stroke="none"/><path d="M1165.500 749.500l4 4M1169.500 749.500l-4 4M1187.500 745.500h2.500l3.500-3.500v12l-3.500-3.500h-2.500zM1196 745.500q1.500 2.500 0 5M1198.500 743.500q3 4.500 0 9M1201 742q4 6 0 12"/></svg>
<span class="align-self-center" style="width:27px;white-space:nowrap;letter-spacing:-.35px">ENG</span>
<div class="clock text-center" style="padding-top:2px"><div>04:05 PM</div><div>16-10-2023</div></div>
<svg width="50" height="40" viewBox="1316 728 50 40"><path stroke="#fff" d="M1325.500 740.500h15v11.500h-5l-2.500 3-2.500-3h-5z"/><path stroke="#777" stroke-width="1" d="M1361.500 728v40"/></svg>
</footer>
<script src="https://cdn.jsdelivr.net/npm/bootstrap@5.3.0/dist/js/bootstrap.bundle.min.js"></script>
</body>
</html>
